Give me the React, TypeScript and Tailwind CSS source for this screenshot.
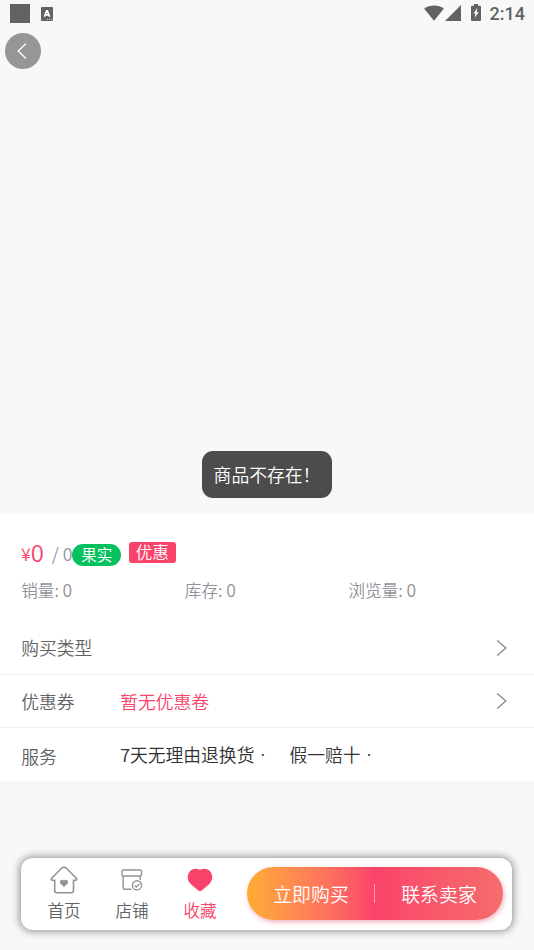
import { ReactNode } from 'react';
import clsx from 'clsx';

const stats = [
  { label: '销量', value: 0 },
  { label: '库存', value: 0 },
  { label: '浏览量', value: 0 },
];

const services = ['7天无理由退换货', '假一赔十'];

function StatusBar() {
  return (
    <div className="flex h-[27px] items-center justify-between pl-[10px] pr-[9px] text-[#626262]">
      <div className="flex items-center">
        <div className="h-[19px] w-[20px] bg-[#626262]" />
        <svg className="ml-[11px]" width="12" height="14" viewBox="0 0 12 14">
          <rect width="12" height="14" rx="1" fill="currentColor" />
          <path d="M3.4 9.8L5.6 3.9H6.4L8.6 9.8M4.5 7.9h3" fill="none" stroke="#fff" strokeWidth="1.6" />
          <path d="M6 12.4h1M8 12.4h1M10 12.4h1" stroke="#fff" strokeWidth="0.7" />
        </svg>
      </div>
      <div className="flex items-center">
        <svg className="mb-[1px]" width="20" height="16" viewBox="0 0 20 16" fill="currentColor">
          <path d="M0.2 3.7C5.5-0.6 14.5-0.6 19.8 3.7L10 15.7z" />
        </svg>
        <svg className="mb-[1px] ml-[1px]" width="16" height="16" viewBox="0 0 16 16" fill="currentColor">
          <path d="M16 0v16H0z" />
        </svg>
        <svg className="mb-[2px] ml-[10px]" width="10" height="17" viewBox="0 0 11 17" preserveAspectRatio="none">
          <path d="M3.2 0h4.6v1.7H10q1 0 1 1V16q0 1-1 1H1q-1 0-1-1V2.7q0-1 1-1h2.2z" fill="currentColor" />
          <path d="M7 3.8L2.6 9.5h2.2L4.2 13.8L8.6 8H6.2z" fill="#f8f8f8" />
        </svg>
        <span className="ml-[9px] pt-[1px] font-[Roboto,sans-serif] text-[18px] leading-[26px] font-medium">2:14</span>
      </div>
    </div>
  );
}

function Chevron() {
  return (
    <svg className="mt-[1px]" width="11" height="18" viewBox="0 0 11 18" fill="none" stroke="#87888b" strokeWidth="1.3">
      <path d="M1.2 1.5L9.9 9L1.2 16.5" />
    </svg>
  );
}

function Row({ label, children, arrow, last }: { label: string; children?: ReactNode; arrow?: boolean; last?: boolean }) {
  return (
    <div
      className={clsx(
        'flex items-center pl-[21.2px] pr-[26.8px] text-[17.8px] text-[#606266]',
        last ? 'h-[53px]' : 'h-[53.5px] border-b border-[#eeeeef]'
      )}
    >
      <div className={clsx('w-[99px]', last ? 'pt-[3px]' : 'pt-[1px]')}>{label}</div>
      <div className="flex-1 pt-[1.5px]">{children}</div>
      {arrow && <Chevron />}
    </div>
  );
}

function HomeIcon() {
  return (
    <svg width="28" height="28" viewBox="0 0 28 28" fill="none" stroke="#909399" strokeWidth="1.6" strokeLinejoin="round">
      <path d="M4.7 14.2H2.3Q0.3 14 1.7 12.3L11.6 2.3Q14 0.2 16.4 2.3L26.3 12.3Q27.7 14 25.7 14.2H23.5V24.5Q23.5 26.7 21.3 26.7H6.9Q4.7 26.7 4.7 24.5z" />
      <path d="M14 20.9L10.5 17.7C8.5 15.3 11.9 12.2 14 14.6C16.1 12.2 19.5 15.3 17.5 17.7z" fill="#909399" stroke="none" />
    </svg>
  );
}

function ShopIcon() {
  return (
    <svg width="22" height="22" viewBox="0 0 22 22" fill="none" stroke="#909399" strokeWidth="1.4" strokeLinejoin="round">
      <rect x="1" y="1" width="19.5" height="6" rx="1.3" />
      <path d="M2.1 7V18.3Q2.1 20.3 4.1 20.3H10.5M19.3 7V11" />
      <circle cx="16" cy="16.3" r="4.6" />
      <path d="M13.7 16.5L15.4 18.1L18.5 14.6" />
    </svg>
  );
}

function HeartIcon() {
  return (
    <svg width="26" height="24" viewBox="0 0 26 24" fill="#fa436a">
      <path d="M13 2C10.4 0.3 5.8 0.4 3.2 3C0.2 6.2 0 11 2.3 14.3C4.3 17.3 8.5 20.2 11.2 22.4Q13 23.8 14.8 22.4C17.5 20.2 21.7 17.3 23.7 14.3C26 11 25.8 6.2 22.8 3C20.2 0.4 15.6 0.3 13 2z" />
    </svg>
  );
}

const tabs = [
  { label: '首页', icon: HomeIcon, active: false },
  { label: '店铺', icon: ShopIcon, active: false },
  { label: '收藏', icon: HeartIcon, active: true },
];

function BottomBar() {
  return (
    <div className="ml-[21px] flex h-[72px] w-[491px] items-center rounded-[12px] bg-white px-[9px] shadow-[0_0_9px_1px_rgba(0,0,0,0.45)]">
      {tabs.map(({ label, icon: Icon, active }) => (
        <div key={label} className="flex w-[68px] flex-col items-center pt-[1px]">
          <div className="flex h-[31px] items-center">
            <Icon />
          </div>
          <span className={clsx('text-[16.6px] leading-[30px]', active ? 'text-[#fa436a]' : 'text-[#606266]')}>
            {label}
          </span>
        </div>
      ))}
      <div className="mb-[1px] ml-auto flex h-[53px] w-[256px] items-center rounded-full bg-linear-to-r from-[#ffac30] via-[#fa436a] to-[#f56c6c] text-[18.9px] text-white shadow-[1px_2px_5px_rgba(219,63,96,0.4)]">
        <button className="flex-1 pt-[2px] pl-px">立即购买</button>
        <div className="mr-[1px] h-[19px] w-px bg-white/50" />
        <button className="flex-1 pt-[2px] pr-px">联系卖家</button>
      </div>
    </div>
  );
}

export default function App() {
  return (
    <div className="relative flex h-[950px] w-[534px] flex-col overflow-hidden bg-[#f8f8f8] font-['Noto_Sans_CJK_SC',sans-serif] font-[350]">
      <StatusBar />
      <div className="h-[487px] pl-[5px] pt-[6px]">
        <button className="flex size-[36px] items-center justify-center rounded-full bg-[#969696] pr-[2px]">
          <svg width="10" height="18" viewBox="0 0 10 18" fill="none" stroke="#fff" strokeWidth="1.3">
            <path d="M9 1.5L1.2 9L9 16.5" />
          </svg>
        </button>
      </div>

      <div className="h-[107px] bg-white pt-[27px]">
        {/* Price */}
        <div className="flex h-[26px] items-center pl-[21px]">
          <span className="mb-[2px] text-[17.8px] leading-6 text-[#fa436a]">¥</span>
          <span className="mb-[5px] w-[13px] text-[24px] leading-6 text-[#fa436a]">0</span>
          <span className="mb-[3px] ml-[8px] w-[20px] text-[17.8px] leading-6 whitespace-nowrap text-[#909399]">/ 0</span>
          <span className="mt-[2px] flex h-[22px] w-[49px] items-center justify-center rounded-full bg-[#07c160] pl-px text-[15.6px] text-white">
            果实
          </span>
          <span className="mb-[3px] ml-[8px] flex h-[21px] w-[47px] items-center justify-center rounded-[3px] bg-[#fa436a] text-[16.6px] text-white">
            优惠
          </span>
        </div>
        {/* Stats */}
        <div className="mt-[10px] ml-[21.2px] grid w-[491px] grid-cols-3 text-[16.6px] leading-[26px] text-[#909399]">
          {stats.map((s) => (
            <span key={s.label}>
              {s.label}: <span className="text-[17.5px]">{s.value}</span>
            </span>
          ))}
        </div>
      </div>

      <div className="bg-white">
        <Row label="购买类型" arrow />
        <Row label="优惠券" arrow>
          <span className="text-[#fa436a]">暂无优惠卷</span>
        </Row>
        <Row label="服务" last>
          <div className="flex gap-[22px] text-[#303133]">
            {services.map((s) => (
              <span key={s}>
                {s} <span className="inline-block w-[9px] text-center font-[Roboto,sans-serif] font-normal">·</span>
              </span>
            ))}
          </div>
        </Row>
      </div>

      <div className="mt-auto pb-[20px]">
        <BottomBar />
      </div>

      {/* Toast */}
      <div className="absolute top-[451px] left-[202px] flex h-[47px] w-[130px] items-center rounded-[11px] bg-[#4c4c4c] pl-[11.6px] text-[17.8px] whitespace-nowrap text-white">
        商品不存在！
      </div>
    </div>
  );
}
